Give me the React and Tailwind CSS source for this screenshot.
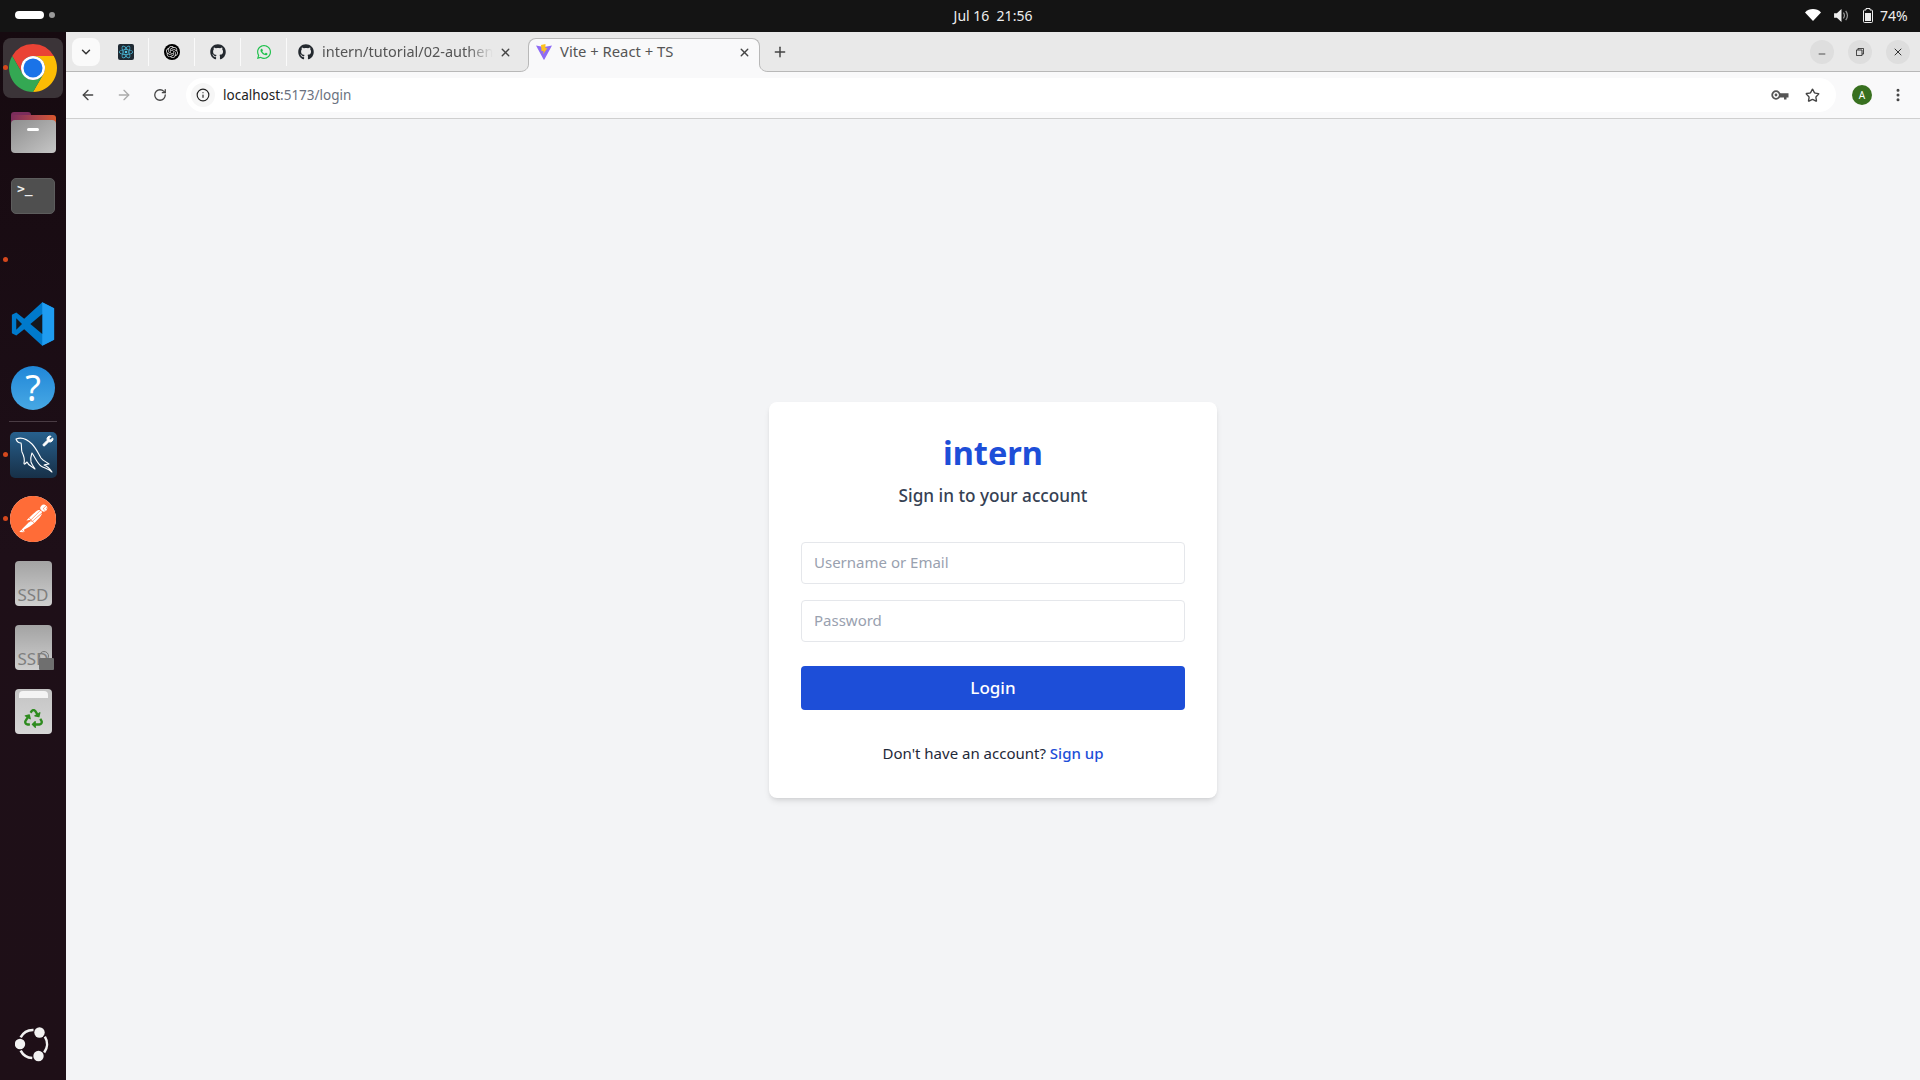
import React from "react";
import { ArrowLeft, ArrowRight, RotateCw, Info, Star, EllipsisVertical, ChevronDown, X, Plus, Minus, Wrench } from "lucide-react";
import { FaGithub, FaWhatsapp, FaRecycle } from "react-icons/fa";
import { SiReact, SiOpenai, SiPostman } from "react-icons/si";

const uiFont = { fontFamily: '"Noto Sans", sans-serif' };

function ChromeLogo() {
  return (
    <svg viewBox="0 0 48 48" className="w-[48px] h-[48px]">
      <path d="M24 0A24 24 0 0 1 44.78 12H24A12 12 0 0 0 13.61 30L3.22 12A24 24 0 0 1 24 0z" fill="#ea4335" />
      <path d="M44.78 12A24 24 0 0 1 24 48L34.39 30A12 12 0 0 0 24 12z" fill="#fbbc04" />
      <path d="M3.22 12A24 24 0 0 0 24 48L34.39 30A12 12 0 0 1 13.61 30z" fill="#34a853" />
      <circle cx="24" cy="24" r="12" fill="#fff" />
      <circle cx="24" cy="24" r="9.5" fill="#1a73e8" />
    </svg>
  );
}

function FilesIcon() {
  return (
    <div className="relative w-[45px] h-[41px]">
      <div className="absolute top-0 left-0 w-[20px] h-[8px] rounded-t-[3px] bg-[#7c2d5c]" />
      <div className="absolute top-[3px] left-0 w-full h-[18px] rounded-t-[3px] bg-gradient-to-r from-[#7c2d5c] to-[#d9572b]" />
      <div className="absolute top-[8px] left-0 w-full h-[33px] rounded-[4px] bg-gradient-to-br from-[#8e8e8e] to-[#c6c6c6] flex justify-center pt-[8px]">
        <div className="w-[12px] h-[3px] rounded-sm bg-white" />
      </div>
    </div>
  );
}

function TerminalIcon() {
  return (
    <div className="w-[44px] h-[36px] rounded-[5px] bg-[#4f4f4f] border border-[#5d5d5d] pl-[5px] text-[#eee] text-[13px] leading-[20px] font-bold" style={{ fontFamily: '"DejaVu Sans Mono", monospace' }}>
      &gt;_
    </div>
  );
}

function VsCodeLogo() {
  return (
    <svg viewBox="0 0 100 100" className="w-[44px] h-[44px]">
      <path d="M71 99.3 98 86V14L71 .7 30 38 12 24 2 29v42l10 5 18-14z" fill="#007acc" />
      <path d="M71 .7 98 14v72L71 99.3z" fill="#1f9cf0" />
      <path d="M71 27 44 50l27 23z" fill="#15171c" />
      <path d="M12 37v26l13-13z" fill="#15171c" />
    </svg>
  );
}

function DolphinIcon() {
  return (
    <svg viewBox="0 0 47 46" className="w-[47px] h-[46px]" fill="none" stroke="#fff" strokeWidth="1.1" strokeLinejoin="round">
      <path d="M6 7c5-2 11 0 16 5 4 4 6 9 9 14 2 3 6 4 8 6-2 0-4 1-5 1 3 1 6 4 8 7-3-3-8-4-11-6-4-3-6-9-9-13-1 3-2 5-1 9 1 3 3 5 4 7-4-3-7-4-8-7-2 2-3 3-3 1 1-4 0-7-2-11-1-3 0-6-1-9-2 0-4-1-5-4z" />
    </svg>
  );
}

function SsdIcon({ locked }) {
  return (
    <div className="relative w-[37px] h-[45px] rounded-[4px] bg-gradient-to-b from-[#a3a3a3] to-[#cfcfcf] flex items-end justify-center">
      <span className="text-[17px] leading-[22px] text-[#7f7f7f]" style={uiFont}>SSD</span>
      {locked && (
        <>
          <div className="absolute right-[3px] bottom-[9px] w-[10px] h-[10px] rounded-full border border-[#777]" />
          <div className="absolute right-[-2px] bottom-0 w-[15px] h-[12px] bg-[#6f6f6f] rounded-[1px]" />
        </>
      )}
    </div>
  );
}

function UbuntuLogo() {
  return (
    <svg viewBox="0 0 36 36" className="w-[36px] h-[36px]">
      <g fill="none" stroke="#f2f2f2" strokeWidth="2.6">
        <path d="M29.87 10.58A14 14 0 0 1 29.18 26.43" />
        <path d="M17.27 31.98A14 14 0 0 1 5.64 24.57" />
        <path d="M5.64 11.43A14 14 0 0 1 18.49 4.01" />
      </g>
      <circle cx="24.5" cy="6.5" r="5.2" fill="#f2f2f2" />
      <circle cx="5" cy="18" r="5.2" fill="#f2f2f2" />
      <circle cx="23.5" cy="30" r="5.2" fill="#f2f2f2" />
    </svg>
  );
}

function DockSlot({ children, running }) {
  return (
    <div className="relative w-full h-[64px] flex items-center justify-center shrink-0">
      {running && <span className="absolute left-[3px] top-[29px] w-[5px] h-[5px] rounded-full bg-[#d5481d]" />}
      {children}
    </div>
  );
}

function Dock() {
  return (
    <aside className="w-[66px] shrink-0 flex flex-col pt-[4px] pb-[4px] bg-gradient-to-b from-[#160a10] via-[#1e0f18] to-[#1e0f17]">
      <DockSlot running>
        <div className="w-[60px] h-[60px] rounded-[8px] bg-[#3b3438] flex items-center justify-center">
          <ChromeLogo />
        </div>
      </DockSlot>
      <DockSlot><FilesIcon /></DockSlot>
      <DockSlot><TerminalIcon /></DockSlot>
      <DockSlot running />
      <DockSlot><VsCodeLogo /></DockSlot>
      <DockSlot>
        <div className="w-[44px] h-[44px] rounded-full bg-gradient-to-b from-[#1f87d8] to-[#47a8e4] flex items-center justify-center text-white text-[36px] leading-none" style={uiFont}>?</div>
      </DockSlot>
      <div className="mx-[9px] h-px bg-[#4a3c44] my-[1px] shrink-0" />
      <DockSlot running>
        <div className="relative w-[47px] h-[46px] rounded-[5px] bg-gradient-to-b from-[#27608d] to-[#173048]">
          <DolphinIcon />
          <Wrench className="absolute top-[3px] right-[3px] w-[12px] h-[12px] text-white fill-white" />
        </div>
      </DockSlot>
      <DockSlot running>
        <div className="w-[46px] h-[46px] rounded-full bg-white flex items-center justify-center">
          <SiPostman className="w-[46px] h-[46px] text-[#ff6c37]" />
        </div>
      </DockSlot>
      <DockSlot><SsdIcon /></DockSlot>
      <DockSlot><SsdIcon locked /></DockSlot>
      <DockSlot>
        <div className="relative w-[37px] h-[45px] rounded-[4px] bg-gradient-to-b from-[#c4c4c4] to-[#d6d6d6] flex items-end justify-center pb-[6px]">
          <div className="absolute top-[2px] left-[4px] right-[4px] h-[7px] bg-[#f4f4f4] rounded-t-sm" />
          <FaRecycle className="w-[19px] h-[19px] text-[#2e8b1f]" />
        </div>
      </DockSlot>
      <div className="mt-auto">
        <DockSlot><UbuntuLogo /></DockSlot>
      </div>
    </aside>
  );
}

function TopBar() {
  return (
    <header className="h-[32px] shrink-0 bg-[#141414] flex items-center text-[#eeeeee] text-[14px] pb-[2px]" style={uiFont}>
      <div className="w-[181px] flex items-center pl-[15px] gap-[5px]">
        <span className="w-[29px] h-[8px] rounded-full bg-white" />
        <span className="w-[6px] h-[6px] rounded-full bg-[#9a9a9a]" />
      </div>
      <div className="flex-1 text-center whitespace-pre">Jul 16  21:56</div>
      <div className="w-[115px] flex items-center gap-[11px]">
        <svg viewBox="0 0 16 12" className="w-[16px] h-[12px]"><path d="M0 3.4C4.4-1 11.6-1 16 3.4L8 12z" fill="#fff" /></svg>
        <svg viewBox="0 0 16 14" className="w-[15px] h-[13px] ml-[2px]">
          <path d="M0 4.5h3L8 0v14L3 9.5H0z" fill="#eee" />
          <path d="M10 4c1.4 1.8 1.4 4.2 0 6M12.5 2c2.3 3 2.3 7 0 10" stroke="#999" strokeWidth="1.3" fill="none" />
        </svg>
        <svg viewBox="0 0 10 15" className="w-[10px] h-[15px] ml-[3px]">
          <path d="M3 .5h4v1.5h1.5a1 1 0 0 1 1 1v10.5a1 1 0 0 1-1 1h-7a1 1 0 0 1-1-1V3a1 1 0 0 1 1-1H3z" fill="none" stroke="#eee" />
          <rect x="2" y="5" width="6" height="8" fill="#eee" />
        </svg>
        <span className="-ml-[4px] text-[14px]">74%</span>
      </div>
    </header>
  );
}

function ViteLogo() {
  return (
    <svg viewBox="0 0 16 16" className="w-[16px] h-[16px]">
      <path d="M0 1.5 8 3l8-1.5L8.4 15.5a.5.5 0 0 1-.8 0z" fill="#8f6cf5" />
      <path d="M9.5 0 5 1l.6 6.2 2-.4-.4 3.4L11.4 4l-2 .3z" fill="#fdc21d" />
    </svg>
  );
}

function PinnedTab({ children }) {
  return (
    <div className="w-[46px] h-[28px] flex items-center justify-center border-r border-[#fafafa]">
      {children}
    </div>
  );
}

function TabStrip() {
  return (
    <div className="relative h-[40px] shrink-0 bg-[#e9e9e9] border-b border-[#b8b8b8] pt-[6px] flex items-start" style={uiFont}>
      <div className="w-[28px] h-[28px] ml-[6px] rounded-[8px] bg-[#fafafa] flex items-center justify-center">
        <ChevronDown className="w-[14px] h-[14px] text-[#333]" strokeWidth={2.5} />
      </div>
      <div className="flex ml-[3px]">
        <PinnedTab>
          <div className="w-[16px] h-[16px] rounded-[2px] bg-[#1f2a33] flex items-center justify-center">
            <SiReact className="w-[14px] h-[14px] text-[#4fc6e8]" />
          </div>
        </PinnedTab>
        <PinnedTab>
          <div className="w-[16px] h-[16px] rounded-full bg-black flex items-center justify-center">
            <SiOpenai className="w-[12px] h-[12px] text-[#ddd]" />
          </div>
        </PinnedTab>
        <PinnedTab><FaGithub className="w-[16px] h-[16px] text-[#24292f]" /></PinnedTab>
        <PinnedTab><FaWhatsapp className="w-[16px] h-[16px] text-[#1fc14c]" /></PinnedTab>
      </div>
      <div className="w-[241px] h-[28px] flex items-center pl-[11px] pr-[16px]">
        <FaGithub className="w-[16px] h-[16px] text-[#24292f] shrink-0" />
        <span className="ml-[8px] flex-1 overflow-hidden whitespace-nowrap text-[14.5px] text-[#555] [mask-image:linear-gradient(to_right,black_85%,transparent)]">intern/tutorial/02-authentication</span>
        <X className="ml-[6px] w-[13px] h-[13px] text-[#444] shrink-0" strokeWidth={2.5} />
      </div>
      <div className="relative z-10 w-[232px] h-[34px] bg-[#f9f9fa] border border-b-0 border-[#b8b8b8] rounded-t-[8px] flex items-start pt-[4px] pl-[7px] pr-[8px]">
        <svg viewBox="0 0 9 8" className="absolute left-[-9px] bottom-0 w-[9px] h-[8px]">
          <path d="M8.5 0C8.5 4.5 5 7.5 0 7.5V8H9V0z" fill="#f9f9fa" />
          <path d="M8.5 0C8.5 4.5 5 7.5 0 7.5" fill="none" stroke="#b8b8b8" />
        </svg>
        <svg viewBox="0 0 9 8" className="absolute right-[-9px] bottom-0 w-[9px] h-[8px]">
          <path d="M.5 0C.5 4.5 4 7.5 9 7.5V8H0V0z" fill="#f9f9fa" />
          <path d="M.5 0C.5 4.5 4 7.5 9 7.5" fill="none" stroke="#b8b8b8" />
        </svg>
        <div className="h-[18px] flex items-center"><ViteLogo /></div>
        <span className="ml-[8px] -mt-[1px] flex-1 text-[14.8px] leading-[18px] text-[#555]">Vite + React + TS</span>
        <div className="h-[18px] flex items-center"><X className="w-[13px] h-[13px] text-[#444]" strokeWidth={2.5} /></div>
      </div>
      <Plus className="ml-[12px] mt-[6px] w-[16px] h-[16px] text-[#444]" strokeWidth={2.2} />
      <div className="ml-auto mr-[10px] mt-[2px] flex gap-[14px]">
        <div className="w-[24px] h-[24px] rounded-full bg-[#dedede] flex items-center justify-center">
          <Minus className="w-[10px] h-[10px] text-[#333] mt-[4px]" strokeWidth={2} />
        </div>
        <div className="w-[24px] h-[24px] rounded-full bg-[#dedede] flex items-center justify-center">
          <svg viewBox="0 0 10 10" className="w-[8px] h-[8px]">
            <path d="M.5 2.5h7v7h-7zM2.5 2.5v-2h7v7h-2" fill="none" stroke="#333" strokeWidth="1.2" />
          </svg>
        </div>
        <div className="w-[24px] h-[24px] rounded-full bg-[#dedede] flex items-center justify-center">
          <X className="w-[12px] h-[12px] text-[#333]" strokeWidth={2} />
        </div>
      </div>
    </div>
  );
}

function Toolbar() {
  return (
    <div className="h-[47px] shrink-0 bg-[#f9f9fa] border-b border-[#cfcfcf] flex items-center" style={uiFont}>
      <ArrowLeft className="ml-[14px] w-[16px] h-[16px] text-[#444]" strokeWidth={2} />
      <ArrowRight className="ml-[20px] w-[16px] h-[16px] text-[#aaa]" strokeWidth={2} />
      <RotateCw className="ml-[21px] w-[14px] h-[14px] text-[#444]" strokeWidth={2.2} />
      <div className="ml-[19px] flex-1 h-[34px] bg-white rounded-full flex items-center pl-[5px] pr-[16px]">
        <div className="w-[24px] h-[24px] rounded-full bg-[#f6f6f6] flex items-center justify-center">
          <Info className="w-[14px] h-[14px] text-[#222]" strokeWidth={2} />
        </div>
        <span className="ml-[8px] text-[13.5px] text-[#222]">localhost<span className="text-[#6b7280]">:5173/login</span></span>
        <svg viewBox="0 0 18 10" className="ml-auto mr-[16px] w-[18px] h-[10px]">
          <circle cx="5" cy="5" r="3.8" fill="none" stroke="#555" strokeWidth="1.8" />
          <circle cx="5" cy="5" r="1.4" fill="#555" />
          <path d="M8.5 3.2H17.5V7.5H15.5V9.5H13V7.5H8.5z" fill="#555" />
        </svg>
        <Star className="w-[15px] h-[15px] text-[#444]" strokeWidth={2.2} />
      </div>
      <div className="ml-[16px] w-[20px] h-[20px] rounded-full bg-[#38701f] flex items-center justify-center text-white text-[10px]">A</div>
      <EllipsisVertical className="ml-[18px] mr-[14px] w-[16px] h-[16px] text-[#444]" strokeWidth={2.5} />
    </div>
  );
}

function LoginCard() {
  return (
    <div className="w-[448px] bg-white rounded-lg shadow-md p-8 pb-[33px]" style={uiFont}>
      <h1 className="text-[32.5px] leading-[38px] font-bold text-[#1d4ed8] text-center">intern</h1>
      <p className="mt-[10px] text-[17.2px] leading-[28px] font-medium text-gray-700 text-center">Sign in to your account</p>
      <form className="mt-[32px]">
        <input
          type="text"
          placeholder="Username or Email"
          className="block w-full h-[42px] px-3 pb-[2px] border border-gray-200 rounded text-[15px] placeholder:text-gray-400 outline-none"
        />
        <input
          type="password"
          placeholder="Password"
          className="block w-full h-[42px] mt-4 px-3 pb-[2px] border border-gray-200 rounded text-[15px] placeholder:text-gray-400 outline-none"
        />
        <button type="button" className="block w-full h-[44px] mt-6 rounded bg-[#1d4ed8] text-white text-[17px] font-medium">
          Login
        </button>
      </form>
      <p className="mt-[31px] text-[15px] leading-[24px] text-gray-800 text-center">
        Don't have an account? <a className="text-[#1d4ed8] font-medium">Sign up</a>
      </p>
    </div>
  );
}

export default function App() {
  return (
    <div className="h-screen flex flex-col overflow-hidden">
      <TopBar />
      <div className="flex-1 flex min-h-0">
        <Dock />
        <div className="flex-1 flex flex-col min-w-0">
          <TabStrip />
          <Toolbar />
          <main className="flex-1 bg-[#f3f4f6] flex items-center justify-center">
            <LoginCard />
          </main>
        </div>
      </div>
    </div>
  );
}
